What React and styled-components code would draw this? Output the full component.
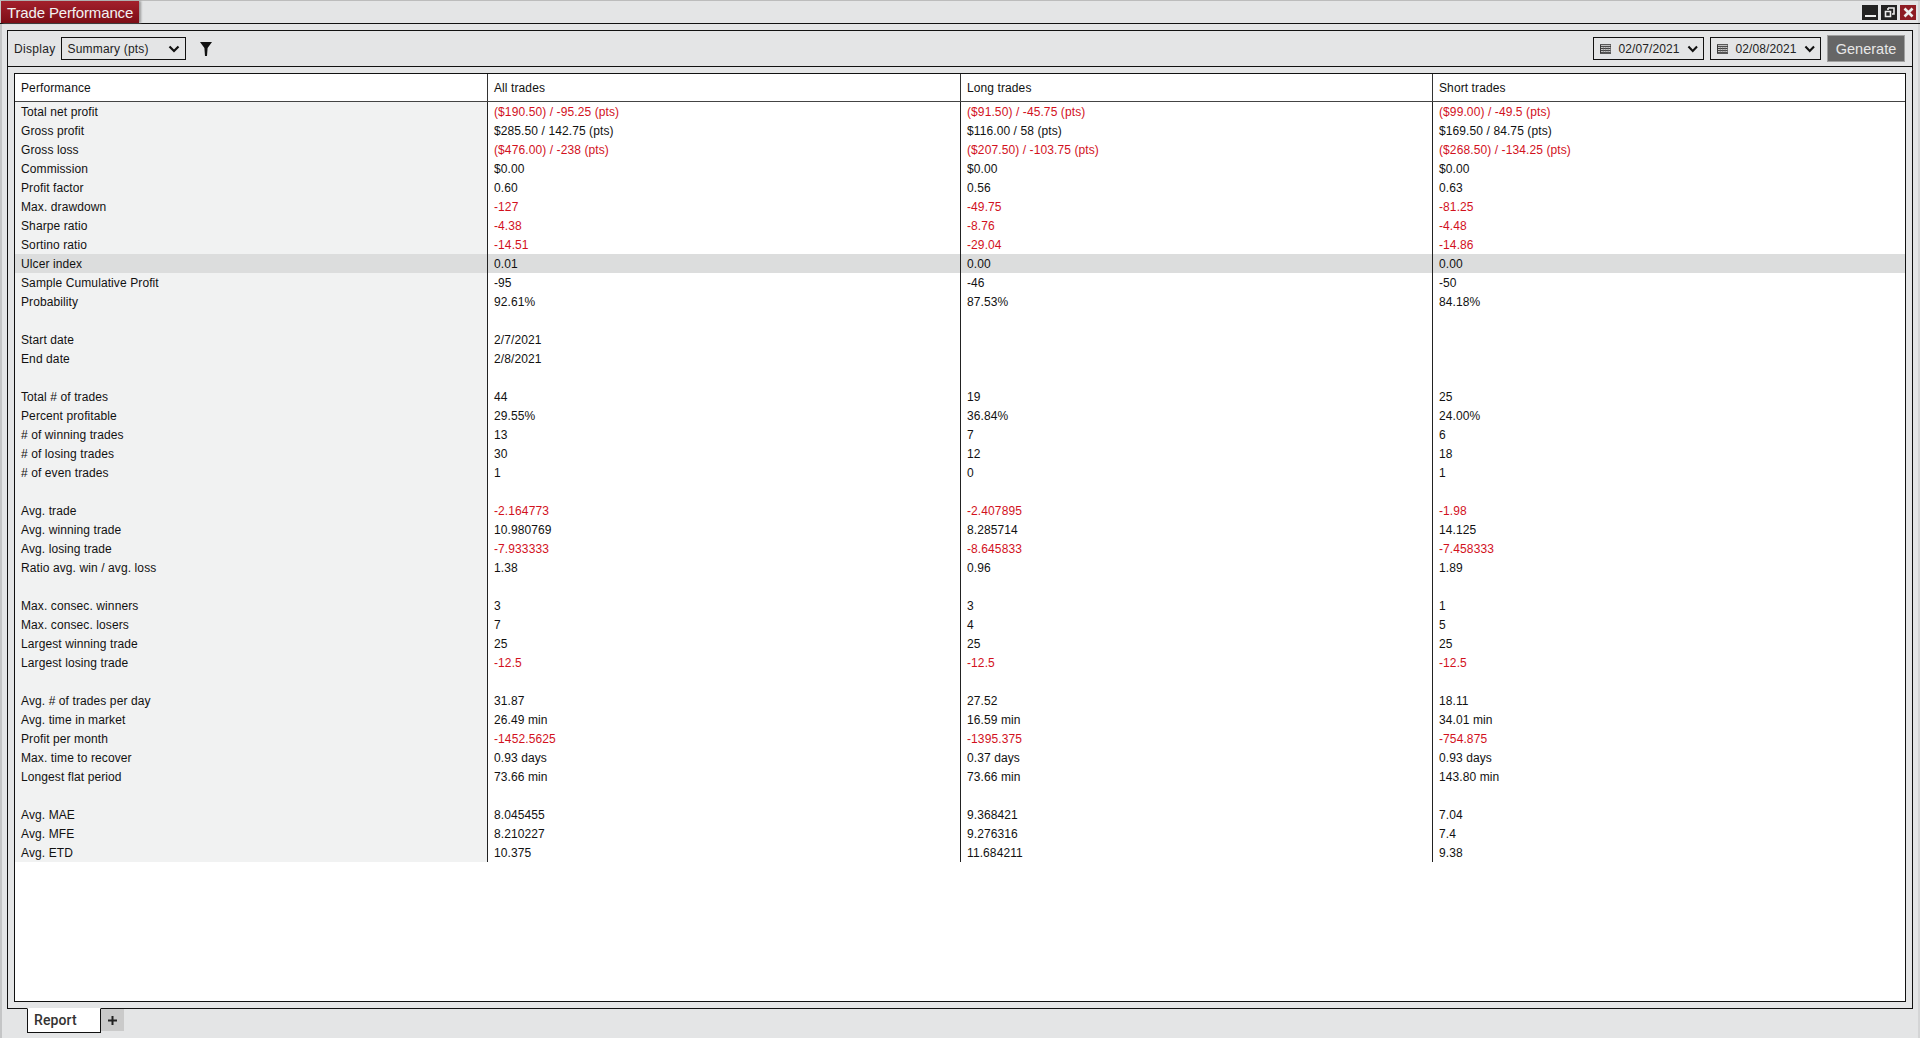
import React from 'react';
import styled, { createGlobalStyle } from 'styled-components';

const GlobalStyle = createGlobalStyle`
  html, body { margin: 0; padding: 0; height: 100%; background: #e4e5e6; }
  body { font-family: "Liberation Sans", Arial, sans-serif; overflow: hidden; }
  #root { height: 100%; }
`;

const Window = styled.div`
  width: 1920px;
  height: 1038px;
  display: flex;
  flex-direction: column;
  background: #e4e5e6;
  box-sizing: border-box;
  border-top: 1px solid #bcbcbc;
  box-shadow: inset 2px 0 0 #c4c5c6, inset -2px 0 0 #d4d5d6;
`;

const TitleBar = styled.div`
  height: 22px;
  flex: none;
  display: flex;
  align-items: stretch;
  justify-content: space-between;
  border-bottom: 1px solid #111;
`;

const TitleTab = styled.div`
  width: 138px;
  margin-left: 1px;
  box-sizing: border-box;
  padding-left: 6px;
  display: flex;
  align-items: center;
  color: #f2f2f2;
  font-size: 15px;
  letter-spacing: -0.15px;
  background: linear-gradient(#a3202c, #7d0d16);
  box-shadow: 2px 0 2px #9a9a9a;
`;

const WindowButtons = styled.div`
  display: flex;
  gap: 3px;
  padding: 4px 4px 0 0;
`;

const WinButton = styled.div`
  width: 16px;
  height: 15px;
  background: ${p => p.$bg || '#222'};
  display: flex;
  align-items: center;
  justify-content: center;
`;

const Panel = styled.div`
  margin: 6px 7px 0 7px;
  height: 979px;
  flex: none;
  border: 1px solid #111;
  box-sizing: border-box;
  display: flex;
  flex-direction: column;
`;

const Toolbar = styled.div`
  height: 35px;
  flex: none;
  display: flex;
  align-items: center;
  padding: 0 7px 0 6px;
  border-bottom: 1px solid #111;
  font-size: 12px;
  color: #222;
`;

const Label = styled.span`
  margin-right: 6px;
  letter-spacing: 0.3px;
`;

const SelectBox = styled.div`
  box-sizing: border-box;
  height: 23px;
  width: ${p => p.$w}px;
  border: 1px solid #111;
  margin-right: ${p => p.$mr || 0}px;
  display: flex;
  align-items: center;
  padding: 0 5px 0 ${p => p.$pl || 5}px;
  gap: ${p => p.$gap || 5}px;
  font-size: 12px;
  color: #222;
  letter-spacing: ${p => p.$ls || 0}px;
`;

const SelectText = styled.span`
  flex: 1;
  white-space: nowrap;
`;

const FilterIcon = styled.svg`
  width: 12px;
  height: 14px;
  margin-left: 14px;
`;

const Spacer = styled.div`
  flex: 1;
`;

const GenerateButton = styled.div`
  width: 78px;
  height: 27px;
  box-sizing: border-box;
  border: 1px solid #a0a0a0;
  background: #666;
  color: #e8e8e8;
  font-size: 14.5px;
  display: flex;
  align-items: center;
  justify-content: center;
`;

const TableArea = styled.div`
  flex: 1;
  min-height: 0;
  padding: 6px;
  display: flex;
`;

const Table = styled.div`
  flex: 1;
  border: 1px solid #111;
  background: #fff;
  box-sizing: border-box;
  font-size: 12px;
  letter-spacing: 0.1px;
  color: #111;
`;

const HeaderRow = styled.div`
  height: 27px;
  display: grid;
  grid-template-columns: 473px 473px 472px 1fr;
  border-bottom: 1px solid #444;
`;

const Row = styled.div`
  height: 19px;
  display: grid;
  grid-template-columns: 473px 473px 472px 1fr;
  background: ${p => (p.$hl ? '#dcdddd' : 'transparent')};
`;

const Cell = styled.div`
  box-sizing: border-box;
  padding-left: 6px;
  display: flex;
  align-items: center;
  white-space: nowrap;
  color: ${p => (p.$neg ? '#d2111d' : '#111')};
  border-right: ${p => (p.$last ? 'none' : '1px solid #222')};
  background: ${p => (p.$name && !p.$hl ? '#f1f2f2' : 'transparent')};
`;

const HeaderCell = styled(Cell)`
  padding-top: 1px;
  border-right: ${p => (p.$last ? 'none' : '1px solid #333')};
`;

const TabStrip = styled.div`
  flex: 1;
  display: flex;
  align-items: flex-start;
  padding-left: 27px;
`;

const Tab = styled.div`
  width: 74px;
  height: 25px;
  margin-top: -1px;
  box-sizing: border-box;
  background: #fff;
  border: 1px solid #111;
  border-top-color: #fff;
  padding: 0 0 2px 6px;
  display: flex;
  align-items: center;
  font-family: Roboto, "Liberation Sans", sans-serif;
  font-size: 14px;
  font-weight: 500;
  letter-spacing: 0.1px;
  color: #333;
`;

const AddTab = styled.div`
  width: 23px;
  height: 22px;
  background: #cacaca;
  display: flex;
  align-items: center;
  justify-content: center;
`;

const ChevronDown = () => (
  <svg width="12" height="8" viewBox="0 0 12 8">
    <path d="M1.5 1.5 6 6l4.5-4.5" fill="none" stroke="#111" strokeWidth="2.2" />
  </svg>
);

const CalendarIcon = () => (
  <svg width="12" height="10" viewBox="0 0 12 10">
    <rect x="0.5" y="0.5" width="11" height="9" fill="#ddd" stroke="#333" />
    <path d="M0 2.5h12M1 4.5h10M1 6.5h10M1 8.5h10" stroke="#333" strokeWidth="1" />
    <path d="M3.5 3v6M6 3v6M8.5 3v6" stroke="#666" strokeWidth="0.6" />
  </svg>
);

const COLUMNS = ['All trades', 'Long trades', 'Short trades'];

const ROWS = [
  ['Total net profit', '-($190.50) / -95.25 (pts)', '-($91.50) / -45.75 (pts)', '-($99.00) / -49.5 (pts)'],
  ['Gross profit', '$285.50 / 142.75 (pts)', '$116.00 / 58 (pts)', '$169.50 / 84.75 (pts)'],
  ['Gross loss', '-($476.00) / -238 (pts)', '-($207.50) / -103.75 (pts)', '-($268.50) / -134.25 (pts)'],
  ['Commission', '$0.00', '$0.00', '$0.00'],
  ['Profit factor', '0.60', '0.56', '0.63'],
  ['Max. drawdown', '-127', '-49.75', '-81.25'],
  ['Sharpe ratio', '-4.38', '-8.76', '-4.48'],
  ['Sortino ratio', '-14.51', '-29.04', '-14.86'],
  ['Ulcer index', '0.01', '0.00', '0.00'],
  ['Sample Cumulative Profit', '=-95', '=-46', '=-50'],
  ['Probability', '92.61%', '87.53%', '84.18%'],
  [],
  ['Start date', '2/7/2021', '', ''],
  ['End date', '2/8/2021', '', ''],
  [],
  ['Total # of trades', '44', '19', '25'],
  ['Percent profitable', '29.55%', '36.84%', '24.00%'],
  ['# of winning trades', '13', '7', '6'],
  ['# of losing trades', '30', '12', '18'],
  ['# of even trades', '1', '0', '1'],
  [],
  ['Avg. trade', '-2.164773', '-2.407895', '-1.98'],
  ['Avg. winning trade', '10.980769', '8.285714', '14.125'],
  ['Avg. losing trade', '-7.933333', '-8.645833', '-7.458333'],
  ['Ratio avg. win / avg. loss', '1.38', '0.96', '1.89'],
  [],
  ['Max. consec. winners', '3', '3', '1'],
  ['Max. consec. losers', '7', '4', '5'],
  ['Largest winning trade', '25', '25', '25'],
  ['Largest losing trade', '-12.5', '-12.5', '-12.5'],
  [],
  ['Avg. # of trades per day', '31.87', '27.52', '18.11'],
  ['Avg. time in market', '26.49 min', '16.59 min', '34.01 min'],
  ['Profit per month', '-1452.5625', '-1395.375', '-754.875'],
  ['Max. time to recover', '0.93 days', '0.37 days', '0.93 days'],
  ['Longest flat period', '73.66 min', '73.66 min', '143.80 min'],
  [],
  ['Avg. MAE', '8.045455', '9.368421', '7.04'],
  ['Avg. MFE', '8.210227', '9.276316', '7.4'],
  ['Avg. ETD', '10.375', '11.684211', '9.38'],
];

// a leading "-" marks a red value, "=" keeps a minus sign in black
const valueOf = v => {
  if (v.startsWith('=')) return { text: v.slice(1), neg: false };
  if (v.startsWith('-(')) return { text: v.slice(1), neg: true };
  return { text: v, neg: v.startsWith('-') };
};

export default function App() {
  return (
    <>
      <GlobalStyle />
      <Window>
        <TitleBar>
          <TitleTab>Trade Performance</TitleTab>
          <WindowButtons>
            <WinButton>
              <svg width="11" height="11" viewBox="0 0 11 11"><rect x="0" y="8" width="11" height="2" fill="#eee" /></svg>
            </WinButton>
            <WinButton>
              <svg width="11" height="11" viewBox="0 0 11 11">
                <path d="M4 1h6v6H8M4 1v2M1.5 4.5h5v5h-5z" fill="none" stroke="#eee" strokeWidth="1.6" />
              </svg>
            </WinButton>
            <WinButton $bg="#8e1c24">
              <svg width="11" height="11" viewBox="0 0 11 11">
                <path d="M1.5 1.5l8 8M9.5 1.5l-8 8" stroke="#eee" strokeWidth="2.6" />
              </svg>
            </WinButton>
          </WindowButtons>
        </TitleBar>
        <Panel>
          <Toolbar>
            <Label>Display</Label>
            <SelectBox $w={125} $pl={5} $ls={0.2}>
              <SelectText>Summary (pts)</SelectText>
              <ChevronDown />
            </SelectBox>
            <FilterIcon viewBox="0 0 12 14">
              <path d="M0 0h12L7.6 6 7 14H5L4.4 6z" fill="#111" />
            </FilterIcon>
            <Spacer />
            <SelectBox $w={111} $mr={6} $pl={6} $gap={7} $ls={0.1}>
              <CalendarIcon />
              <SelectText>02/07/2021</SelectText>
              <ChevronDown />
            </SelectBox>
            <SelectBox $w={111} $mr={6} $pl={6} $gap={7} $ls={0.1}>
              <CalendarIcon />
              <SelectText>02/08/2021</SelectText>
              <ChevronDown />
            </SelectBox>
            <GenerateButton>Generate</GenerateButton>
          </Toolbar>
          <TableArea>
            <Table>
              <HeaderRow>
                <HeaderCell>Performance</HeaderCell>
                {COLUMNS.map((c, i) => (
                  <HeaderCell key={c} $last={i === 2}>{c}</HeaderCell>
                ))}
              </HeaderRow>
              {ROWS.map((r, i) => {
                const hl = r[0] === 'Ulcer index';
                return (
                  <Row key={i} $hl={hl}>
                    <Cell $name $hl={hl}>{r[0] || ''}</Cell>
                    {[1, 2, 3].map(k => {
                      const { text, neg } = valueOf(r[k] || '');
                      return <Cell key={k} $neg={neg} $last={k === 3}>{text}</Cell>;
                    })}
                  </Row>
                );
              })}
            </Table>
          </TableArea>
        </Panel>
        <TabStrip>
          <Tab>Report</Tab>
          <AddTab>
            <svg width="11" height="11" viewBox="0 0 11 11">
              <path d="M5.5 1v9M1 5.5h9" stroke="#222" strokeWidth="2" />
            </svg>
          </AddTab>
        </TabStrip>
      </Window>
    </>
  );
}
